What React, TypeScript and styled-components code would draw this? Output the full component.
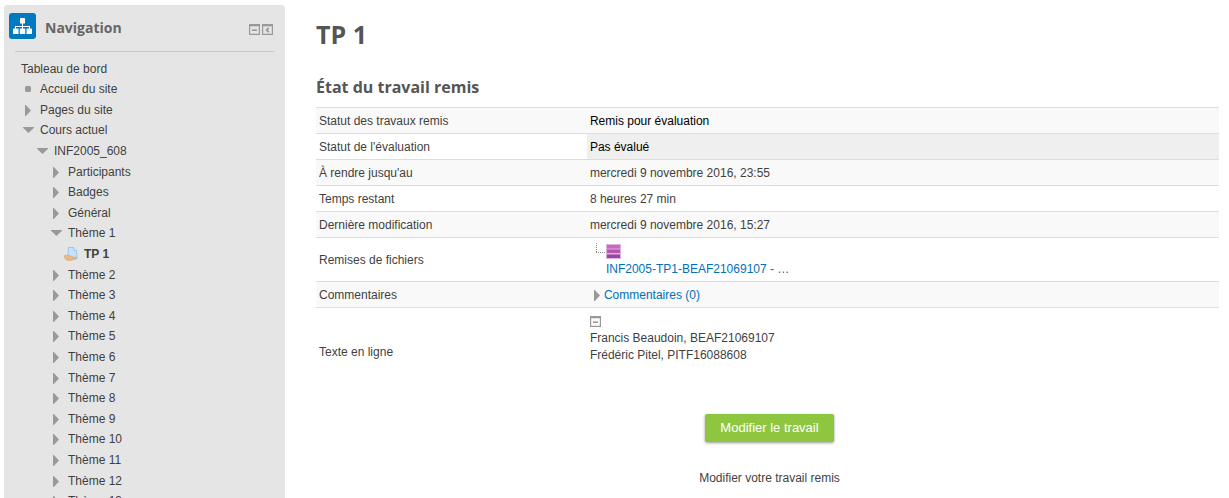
import React from "react";
import styled, { createGlobalStyle } from "styled-components";

const GlobalStyle = createGlobalStyle`
  * { box-sizing: border-box; }
  body {
    margin: 0;
    background: #fff;
    color: #3f3f3f;
    font-family: "Liberation Sans", Arial, sans-serif;
    font-size: 12px;
    line-height: 17px;
  }
`;

const Page = styled.div`
  display: flex;
  align-items: flex-start;
  gap: 31px;
  height: 100vh;
  padding: 5px 10px 0 4px;
  overflow: hidden;
`;

const Sidebar = styled.nav`
  flex: 0 0 281px;
  padding: 8px 11px 12px;
  border-radius: 3px;
  background: #e5e5e5;
`;

const SidebarHeader = styled.header`
  display: flex;
  align-items: flex-start;
  padding-bottom: 12px;
  border-bottom: 1px solid #c8c8c8;
`;

const Badge = styled.span`
  display: flex;
  align-items: center;
  justify-content: center;
  width: 27px;
  height: 26px;
  margin: 0 9px 0 -6px;
  border-radius: 3px;
  background: #0079c1;
`;

const SidebarTitle = styled.h2`
  flex: 1;
  margin: 5px 0 0;
  color: #666;
  font: 700 14px/20px "Open Sans", sans-serif;
`;

const Tools = styled.div`
  display: flex;
  gap: 2px;
  padding: 11px 1px 0 0;
`;

const IconButton = styled.button`
  display: block;
  padding: 0;
  border: 0;
  background: none;
  cursor: pointer;
  svg { display: block; }
`;

const Tree = styled.ul`
  margin: 7px 0 0;
  padding: 0;
  list-style: none;
`;

const TreeItem = styled.li<{ $level: number }>`
  display: flex;
  align-items: center;
  height: 20px;
  padding-left: ${({ $level }) => ($level === 0 ? 6 : $level * 14 - 7)}px;
  &:nth-child(5n),
  &:nth-child(5n + 2),
  &:nth-child(5n + 4) { margin-bottom: 1px; }
`;

const Marker = styled.span`
  display: flex;
  justify-content: center;
  flex: 0 0 12px;
  margin-right: 6px;
  svg { display: block; flex: none; }
`;

const TreeLink = styled.a<{ $current?: boolean }>`
  color: inherit;
  font-weight: ${({ $current }) => ($current ? 700 : 400)};
  text-decoration: none;
`;

const Main = styled.main`
  flex: 1;
  min-width: 0;
`;

const Title = styled.h1`
  margin: 13px 0 0;
  color: #555;
  font: 700 25px/32px "Open Sans", sans-serif;
`;

const Subtitle = styled.h2`
  margin: 26px 0 8px;
  color: #555;
  font: 700 16px/23px "Open Sans", sans-serif;
`;

const StatusTable = styled.table`
  width: 100%;
  border-collapse: collapse;
  table-layout: fixed;
`;

const Row = styled.tr`
  border-top: 1px solid #ddd;
  &:nth-child(odd) { background: #f9f9f9; }
`;

const Label = styled.th`
  width: 30%;
  padding: 5px 3px 3px;
  font-weight: 400;
  text-align: left;
`;

const Value = styled.td<{ $tone?: "strong" | "shaded" }>`
  padding: 5px 3px 3px;
  color: ${({ $tone }) => ($tone ? "#000" : "inherit")};
  background: ${({ $tone }) => ($tone === "shaded" ? "#efefef" : "transparent")};
`;

const Link = styled.a`
  color: #0070b8;
  text-decoration: none;
`;

const FileEntry = styled.div`
  padding-left: 6px;
  svg { display: block; margin-bottom: 1px; }
  a { display: block; padding-left: 10px; }
`;

const CommentToggle = styled(Link)`
  display: flex;
  align-items: center;
  gap: 4px;
  padding-left: 4px;
`;

const OnlineText = styled.div`
  padding: 3px 0 27px;
  p { margin: 0; }
  button { margin-bottom: 3px; }
`;

const Actions = styled.div`
  display: flex;
  flex-direction: column;
  align-items: center;
  gap: 28px;
  margin-top: 20px;
  padding-left: 4px;
  p { margin: 0; }
`;

const PrimaryButton = styled.button`
  padding: 4px 15px;
  border: 0;
  border-radius: 2px;
  background: #8ec63f;
  box-shadow: 0 1px 3px rgba(0, 0, 0, 0.4);
  color: #fff;
  font: 13px/20px "Liberation Sans", Arial, sans-serif;
  cursor: pointer;
`;

const Sitemap = () => (
  <svg width="19" height="16" viewBox="0 0 19 16" fill="#fff" aria-hidden="true">
    <rect x="7" y="0" width="5" height="5.500" rx=".6" />
    <path d="M9 5h1v3h7v3h-1V9h-6v2H9V9H3v2H2V8h7z" />
    <rect x="0" y="10.500" width="5.500" height="5.500" rx=".6" />
    <rect x="6.750" y="10.500" width="5.500" height="5.500" rx=".6" />
    <rect x="13.500" y="10.500" width="5.500" height="5.500" rx=".6" />
  </svg>
);

const PanelIcon = ({ dock }: { dock?: boolean }) => (
  <svg width="11" height="11" viewBox="0 0 11 11" fill="none" stroke="#999" aria-hidden="true">
    <path d="M.6.6h9.800v9.800H.6z" strokeWidth="1.200" />
    <path d="M0 1.200h11" strokeWidth="2.200" />
    {dock ? <path d="M6.800 3.800L4.600 6l2.200 2.200" strokeWidth="1.800" /> : <path d="M3 6.200h5" strokeWidth="1.600" />}
  </svg>
);

const RightArrow = () => (
  <svg width="6" height="11" viewBox="0 0 6 11" fill="#999" aria-hidden="true">
    <path d="M0 0h.8L6 5.500.8 11H0z" />
  </svg>
);

const DownArrow = () => (
  <svg width="11" height="6" viewBox="0 0 11 6" fill="#999" aria-hidden="true">
    <path d="M0 0h11v.8L5.500 6 0 .8z" />
  </svg>
);

const Dot = () => (
  <svg width="6" height="6" viewBox="0 0 6 6" aria-hidden="true">
    <rect width="6" height="6" rx="1.500" fill="#999" />
  </svg>
);

const Assignment = () => (
  <svg width="14" height="14" viewBox="0 0 14 14" aria-hidden="true">
    <path d="M4.500.5h5l3 3L13 12H3.500z" fill="#c5e1fb" stroke="#8fbdea" strokeWidth=".8" />
    <path d="M9.500.5l.5 3h2.500" fill="#eef7ff" stroke="#8fbdea" strokeWidth=".8" />
    <path d="M0 9c1.500-1 3.500-1.200 5-.4l3.500 1c1 .5.500 1.300-.5 1.200l4-.7c1 .2.900 1-.2 1.600-3 1.600-6.500 2.200-8.500 1.500C1.500 12.400 0 11 0 9z" fill="#ebb985" stroke="#d29b62" strokeWidth=".5" />
  </svg>
);

const FileIcon = () => (
  <svg width="26" height="17" viewBox="0 0 26 17" aria-hidden="true">
    <path d="M.5 0v10M0 9.500h10" stroke="#888" strokeDasharray="1 1" fill="none" />
    <rect x="10" y="1" width="15" height="15" fill="#dcb4dc" />
    <path d="M11 2h13v3.500H11z" fill="#c868c0" />
    <path d="M11 6.500h13V10H11z" fill="#b455b0" />
    <path d="M11 11.500h13V15H11z" fill="#9b459d" />
  </svg>
);

type MarkerKind = "none" | "dot" | "closed" | "open" | "assignment";

const markers: Record<MarkerKind, React.ReactNode> = {
  none: null,
  dot: <Dot />,
  closed: <RightArrow />,
  open: <DownArrow />,
  assignment: <Assignment />,
};

const items: { label: string; level: number; marker: MarkerKind }[] = [
  { label: "Tableau de bord", level: 0, marker: "none" },
  { label: "Accueil du site", level: 1, marker: "dot" },
  { label: "Pages du site", level: 1, marker: "closed" },
  { label: "Cours actuel", level: 1, marker: "open" },
  { label: "INF2005_608", level: 2, marker: "open" },
  { label: "Participants", level: 3, marker: "closed" },
  { label: "Badges", level: 3, marker: "closed" },
  { label: "Général", level: 3, marker: "closed" },
  { label: "Thème 1", level: 3, marker: "open" },
  { label: "TP 1", level: 4, marker: "assignment" },
  ...Array.from({ length: 12 }, (_, i) => ({
    label: `Thème ${i + 2}`,
    level: 3,
    marker: "closed" as const,
  })),
];

export default function App() {
  return (
    <>
      <GlobalStyle />
      <Page>
        <Sidebar aria-label="Navigation">
          <SidebarHeader>
            <Badge><Sitemap /></Badge>
            <SidebarTitle>Navigation</SidebarTitle>
            <Tools>
              <IconButton type="button" aria-label="Cacher le bloc Navigation"><PanelIcon /></IconButton>
              <IconButton type="button" aria-label="Ancrer le bloc Navigation"><PanelIcon dock /></IconButton>
            </Tools>
          </SidebarHeader>
          <Tree>
            {items.map(({ label, level, marker }) => (
              <TreeItem key={label} $level={level}>
                {marker !== "none" && <Marker>{markers[marker]}</Marker>}
                <TreeLink href="#" $current={label === "TP 1"}>{label}</TreeLink>
              </TreeItem>
            ))}
          </Tree>
        </Sidebar>
        <Main>
          <Title>TP 1</Title>
          <Subtitle>État du travail remis</Subtitle>
          <StatusTable>
            <tbody>
              <Row>
                <Label scope="row">Statut des travaux remis</Label>
                <Value $tone="strong">Remis pour évaluation</Value>
              </Row>
              <Row>
                <Label scope="row">Statut de l'évaluation</Label>
                <Value $tone="shaded">Pas évalué</Value>
              </Row>
              <Row>
                <Label scope="row">À rendre jusqu'au</Label>
                <Value>mercredi 9 novembre 2016, 23:55</Value>
              </Row>
              <Row>
                <Label scope="row">Temps restant</Label>
                <Value>8 heures 27 min</Value>
              </Row>
              <Row>
                <Label scope="row">Dernière modification</Label>
                <Value>mercredi 9 novembre 2016, 15:27</Value>
              </Row>
              <Row>
                <Label scope="row">Remises de fichiers</Label>
                <Value>
                  <FileEntry>
                    <FileIcon />
                    <Link href="#">INF2005-TP1-BEAF21069107 - …</Link>
                  </FileEntry>
                </Value>
              </Row>
              <Row>
                <Label scope="row">Commentaires</Label>
                <Value>
                  <CommentToggle href="#"><RightArrow />Commentaires (0)</CommentToggle>
                </Value>
              </Row>
              <Row>
                <Label scope="row">Texte en ligne</Label>
                <Value>
                  <OnlineText>
                    <IconButton type="button" aria-label="Réduire le texte"><PanelIcon /></IconButton>
                    <p>Francis Beaudoin, BEAF21069107</p>
                    <p>Frédéric Pitel, PITF16088608</p>
                  </OnlineText>
                </Value>
              </Row>
            </tbody>
          </StatusTable>
          <Actions>
            <PrimaryButton type="button">Modifier le travail</PrimaryButton>
            <p>Modifier votre travail remis</p>
          </Actions>
        </Main>
      </Page>
    </>
  );
}
